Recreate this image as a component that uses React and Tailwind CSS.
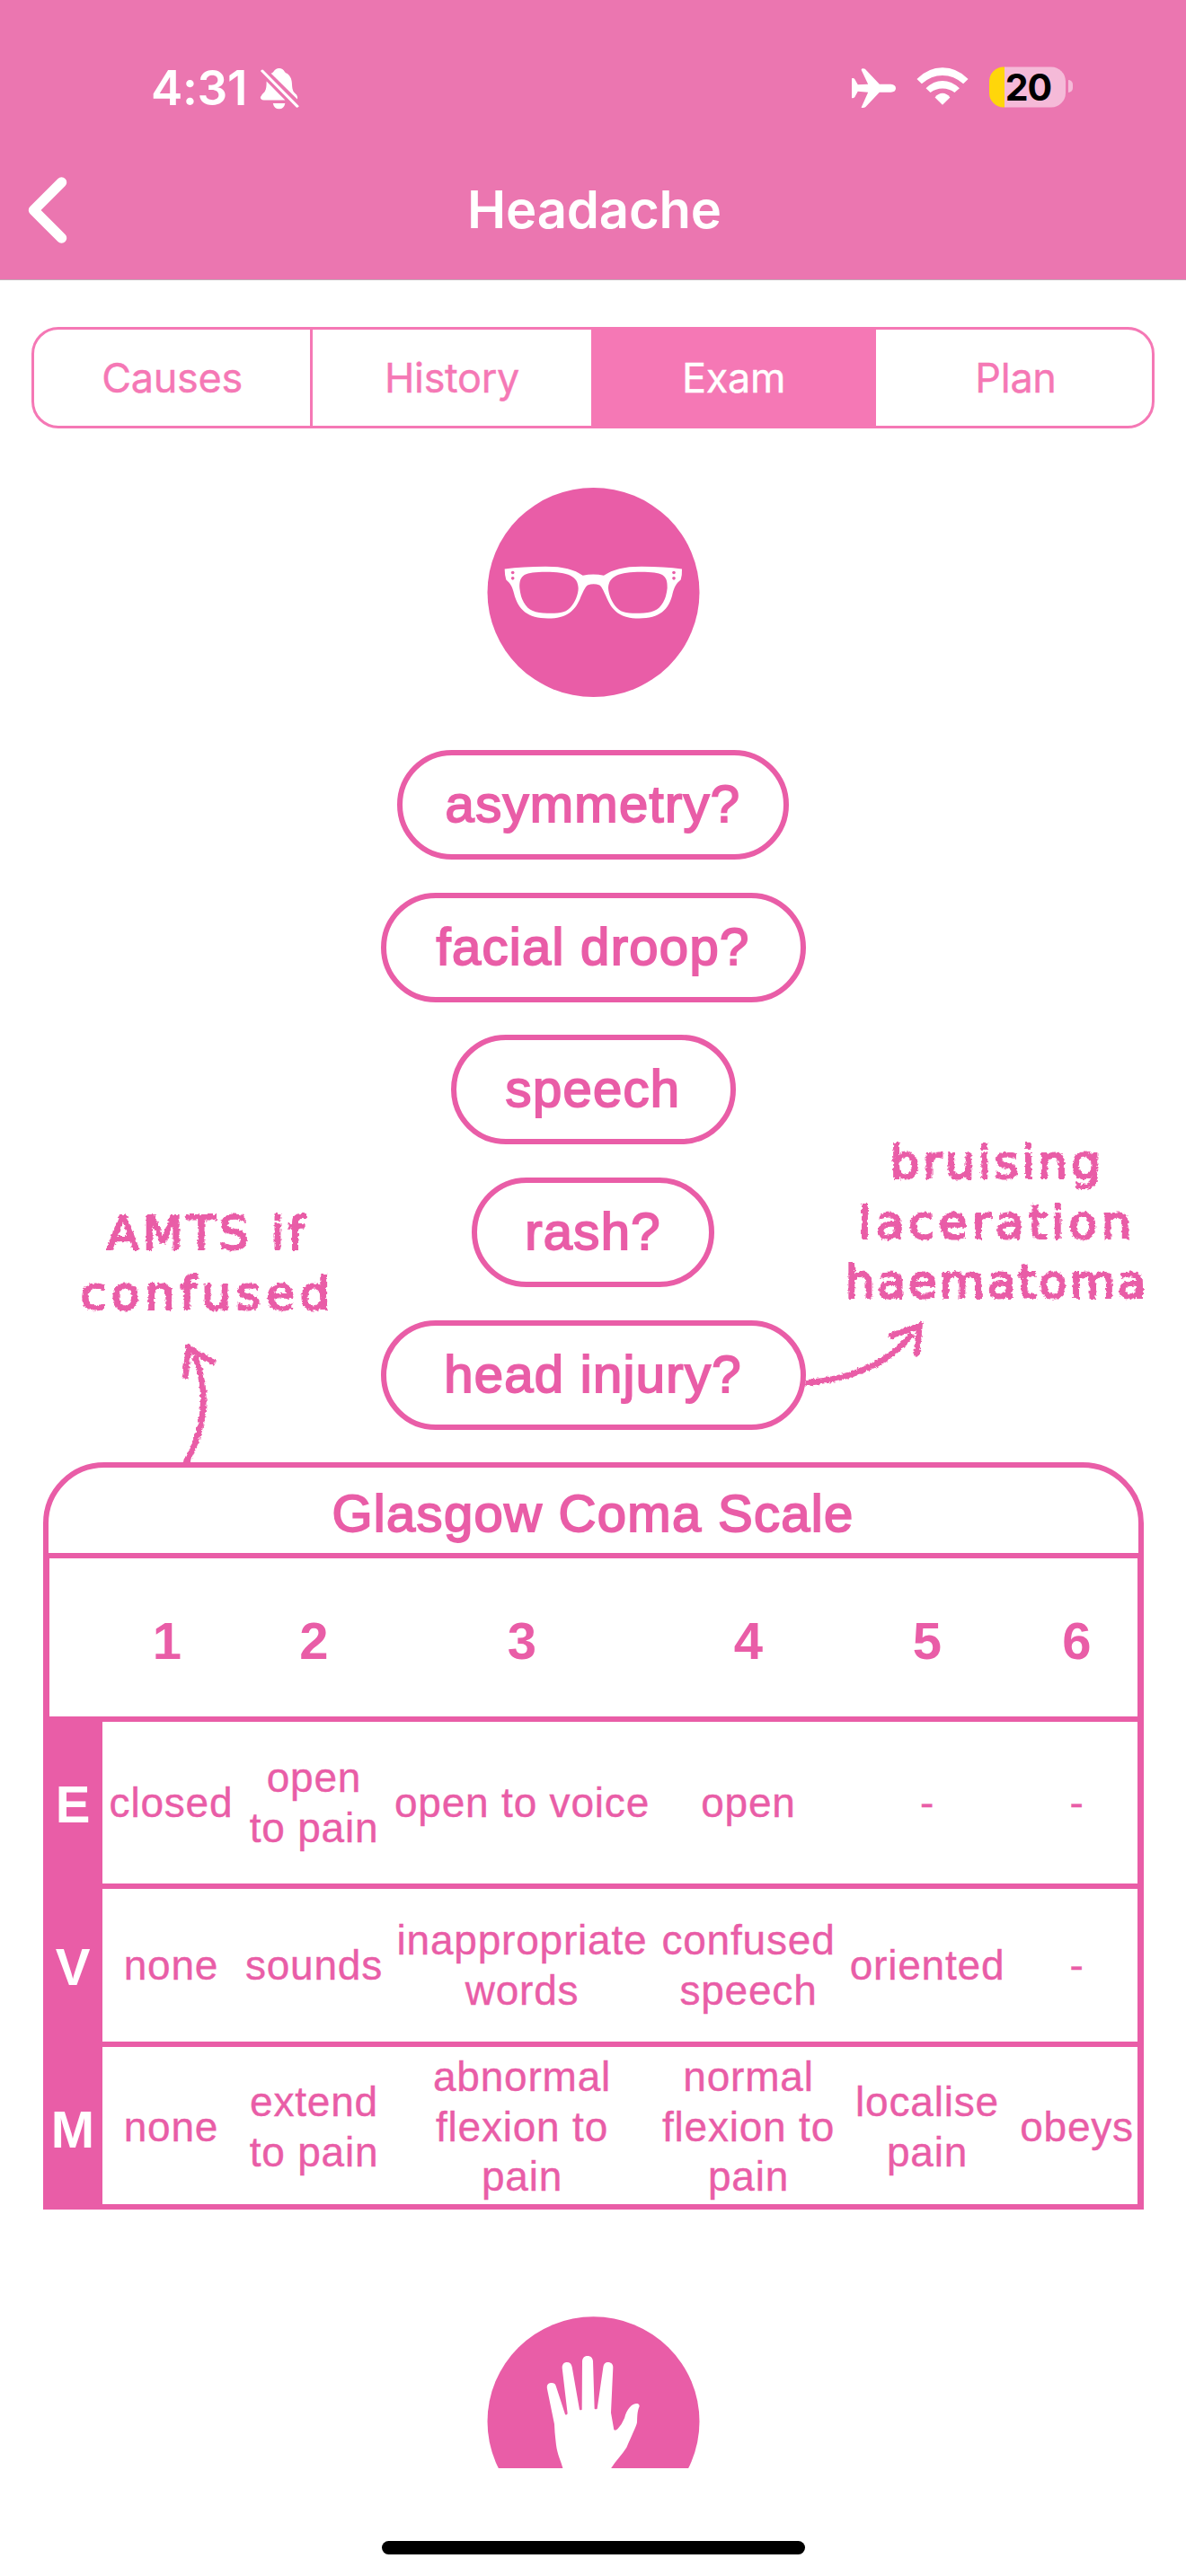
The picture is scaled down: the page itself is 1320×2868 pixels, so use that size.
const PINK = "#e95da7";

function StatusBar() {
  return (
    <div className="flex h-[196px] items-start justify-between pt-[68px] pl-[168px] pr-[126px]">
      <div className="flex h-[60px] items-center">
        <span className="w-[121px] whitespace-nowrap text-[53px] leading-[60px] font-semibold tracking-[-0.3px]">4:31</span>
        <svg className="h-[47px] w-[44px]" viewBox="686 104 104 140" preserveAspectRatio="none" fill="#fff">
          <path d="M716 124 Q720 122 722 119 Q728 107 737 107 Q747 107 752 119 Q754 123 759 125 C768 134 771 147 771 160 C772 185 776 186 783 195 Q787 202 785 210 Z" />
          <path d="M704 150 L753 213 L697 213 Q688 212 688 203 Q690 195 699 185 C704 175 704 165 704 150 Z" />
          <path d="M721 223 H753 Q750 242 737 242 Q724 242 721 223 Z" />
          <path d="M693 116 L785 233" stroke="#fff" strokeWidth="8" strokeLinecap="round" />
        </svg>
      </div>
      <div className="flex h-[60px] items-center">
        <svg className="h-[44px] w-[49px]" viewBox="682 108 116 132" preserveAspectRatio="none" fill="#fff">
          <path d="M682 142 Q687 139 690 145 L698 163 L725 161 L707 113 Q708 107 717 110 L755 161 L785 161 Q798 163 798 174.500 Q798 187 785 188 L755 188 L718 238 Q713 241 707 239 L725 188 L698 185 L690 204 Q686 209 682 207 Z" />
        </svg>
        <svg className="ml-[23px] h-[42px] w-[58px] -translate-y-0.5" viewBox="854 105 138 127" preserveAspectRatio="none" fill="#fff">
          <path d="M855 144 Q885 106 923 106 Q961 106 991 144 L978 160 Q953 132 923 132 Q893 132 868 160 Z" />
          <path d="M879 175 Q899 150 923 150 Q947 150 968 175 L955 190 Q941 176 923 176 Q905 176 891 190 Z" />
          <path d="M903 206 Q912 192 923 192 Q934 192 943 206 L923 231 Z" />
        </svg>
        <div className="ml-[23px] flex h-[45px] w-[85px] -translate-y-[1.5px] items-center justify-center rounded-[16px] bg-gradient-to-r from-[#ffd60a] from-[17px] to-[#f5bad8] to-[17px]">
          <span className="pl-[2px] text-[41px] leading-[54px] font-bold tracking-[-1px] text-black">20</span>
        </div>
        <div className="ml-[3px] h-[14px] w-[5px] -translate-y-0.5 rounded-r-full bg-[#f5bad8]" />
      </div>
    </div>
  );
}

function Header() {
  return (
    <header className="h-[312px] border-b border-[#c0aeb7] bg-[#eb76b0] font-[Inter,sans-serif] text-white">
      <StatusBar />
      <div className="grid h-[75px] grid-cols-[1fr_auto_1fr] items-center">
        <svg className="ml-[30px] h-[76px] w-[46px]" viewBox="0 0 46 76" fill="none" stroke="#fff" strokeWidth="11.500" strokeLinecap="round" strokeLinejoin="round">
          <path d="M38.500 7 L7.500 38 L38.500 69" />
        </svg>
        <h1 className="-translate-y-px pl-[3px] text-[58px] leading-[75px] font-semibold tracking-[-0.2px]">Headache</h1>
      </div>
    </header>
  );
}

function Tabs() {
  return (
    <nav className="mx-[35px] mt-[52px] flex h-[113px] overflow-hidden rounded-[30px] border-[3px] border-[#f578b5] font-[Inter,sans-serif] text-[45px] tracking-[-0.3px] text-[#f578b5] [-webkit-text-stroke:0.4px]">
      <div className="flex w-[310px] items-center justify-center border-r-[3px] border-[#f578b5]">Causes</div>
      <div className="flex w-[310px] items-center justify-center">History</div>
      <div className="flex w-[317px] items-center justify-center bg-[#f578b5] text-white">Exam</div>
      <div className="flex flex-1 items-center justify-center pl-[4px]">Plan</div>
    </nav>
  );
}

function GlassesBadge() {
  return (
    <svg className="mx-auto mt-[66px] block h-[233px] w-[237px]" viewBox="64 39 711 700" preserveAspectRatio="none">
      <ellipse cx="419.500" cy="389" rx="354" ry="350" fill={PINK} />
      <path
        fill="#fff"
        fillRule="evenodd"
        d="M123 311 Q185 303 260 303 C320 303 355 313 384 333 Q419 325 454 333 C485 313 520 303 580 303 Q655 303 715 311 Q716 330 711 347 C694 361 690 372 684 392 C672 448 640 476 572 476 C510 476 483 450 466 412 C455 389 449 372 440 365 Q420 358 400 365 C391 372 384 389 374 412 C357 450 330 476 268 476 C200 476 168 448 154 392 C149 372 144 361 128 347 Q123 330 123 311 Z
           M173 375 C171 330 190 321 260 321 C335 321 368 335 369 375 C369 395 358 425 342 440 C325 459 300 459 265 459 C225 459 202 450 187 423 Q176 405 173 375 Z
           M666 375 C668 330 649 321 579 321 C504 321 471 335 469 375 C470 395 481 425 497 440 C514 459 539 459 574 459 C614 459 637 450 652 423 Q663 405 666 375 Z"
      />
      <circle cx="150" cy="323" r="5.500" fill={PINK} />
      <circle cx="150" cy="342" r="5.500" fill={PINK} />
      <circle cx="688" cy="323" r="5.500" fill={PINK} />
      <circle cx="688" cy="342" r="5.500" fill={PINK} />
    </svg>
  );
}

function HandBadge() {
  return (
    <div className="mx-auto mt-[119px] h-[169px] w-[237px] overflow-hidden">
      <svg className="block h-[234px] w-[237px]" viewBox="64 58 711 702">
        <ellipse cx="419.500" cy="409" rx="354" ry="350" fill={PINK} />
        <path
          fill="#fff"
          d="M289 418 L265 300 C262 285 270 280 280 280 Q291 280 294 290 L325 385 Q329 389 333 383 L315 230 C315 217 322 211 331 211 Q345 211 348 227 L373 369 Q377 373 381 369 L382 208 C383 195 391 190 400 190 C410 190 417 196 418 208 L423 366 Q427 370 432 366 L452 228 C454 216 460 211 468 211 C479 211 485 218 485 228 L478 380 L488 437 Q494 441 501 433 Q515 418 523 398 C531 366 548 349 565 349 Q573 350 573 358 C565 375 566 395 565 412 C563 425 545 460 530 496 C515 520 495 540 479 564 L470 620 H330 L317 564 C305 525 297 515 293 470 Q290 445 289 418 Z"
        />
      </svg>
    </div>
  );
}

function Pill({ className, children }) {
  return (
    <div className={`flex h-[122px] items-center justify-center rounded-full border-[6px] border-[#e95da7] pb-[3px] text-[58px] tracking-[1.3px] [-webkit-text-stroke:1.9px_#e95da7] ${className}`}>
      {children}
    </div>
  );
}

function ChalkFilter() {
  return (
    <svg className="absolute h-0 w-0" aria-hidden="true">
      <filter id="chalk" x="-5%" y="-5%" width="110%" height="110%">
        <feTurbulence type="fractalNoise" baseFrequency="0.3" numOctaves="2" seed="4" result="noise" />
        <feDisplacementMap in="SourceGraphic" in2="noise" scale="5" xChannelSelector="R" yChannelSelector="G" />
      </filter>
    </svg>
  );
}

const noteText =
  "flex flex-col items-center whitespace-nowrap font-[Chalkduster,'DejaVu_Sans',sans-serif] text-[52px] leading-[66.7px] [-webkit-text-stroke:2.2px_#e95da7] [filter:url(#chalk)]";

function Signs() {
  return (
    <section className="mt-[59px] grid h-[793px] grid-cols-[423.500px_473px_1fr] text-[#e95da7]">
      <div className="flex flex-col pt-[505px]">
        <div className={`ml-[6px] w-[450px] ${noteText}`}>
          <span className="tracking-[4.2px]">AMTS if</span>
          <span className="tracking-[5.8px]">confused</span>
        </div>
        <svg className="mt-[20px] ml-[196px] h-[137px] w-[52px] shrink-0 [filter:url(#chalk)]" viewBox="468 517 156 411" fill="none" stroke={PINK} strokeWidth="20">
          <path d="M498 930 C570 800 575 680 531 568" />
          <path d="M498 642 L510 542 L598 590" />
        </svg>
      </div>
      <div className="flex flex-col items-center gap-[36.700px]">
        <Pill className="w-[436px]">asymmetry?</Pill>
        <Pill className="w-[473px]">facial droop?</Pill>
        <Pill className="w-[317px]">speech</Pill>
        <Pill className="w-[270px]">rash?</Pill>
        <Pill className="w-[473px]">head injury?</Pill>
      </div>
      <div className="flex flex-col pt-[426px]">
        <div className={`ml-px w-[424px] ${noteText}`}>
          <span className="tracking-[3.6px]">bruising</span>
          <span className="tracking-[4.9px]">laceration</span>
          <span className="tracking-[2.6px]">haematoma</span>
        </div>
        <svg className="mt-[8px] -ml-1 h-[80px] w-[140px] shrink-0 [filter:url(#chalk)]" viewBox="36 683 420 240" fill="none" stroke={PINK} strokeWidth="20">
          <path d="M46 895 C180 885 310 845 403 732" />
          <path d="M325 740 L427 705 L418 805" />
        </svg>
      </div>
    </section>
  );
}

const rows = [
  { label: "E", height: "h-[186px]", cells: [["closed"], ["open", "to pain"], ["open to voice"], ["open"], ["-"], ["-"]] },
  { label: "V", height: "h-[176px]", cells: [["none"], ["sounds"], ["inappropriate", "words"], ["confused", "speech"], ["oriented"], ["-"]] },
  { label: "M", height: "h-[175px]", cells: [["none"], ["extend", "to pain"], ["abnormal", "flexion to", "pain"], ["normal", "flexion to", "pain"], ["localise", "pain"], ["obeys"]] },
];

const columns = "grid grid-cols-[59px_154px_164px_299px_205px_193px_140px]";

function ComaScale() {
  return (
    <section className="mx-auto flex h-[832px] w-[1225px] flex-col rounded-t-[68px] border-[6px] border-[#e95da7] text-[#e95da7]">
      <h2 className="flex h-[101px] shrink-0 items-center justify-center border-b-[6px] border-[#e95da7] pt-[6px] text-[58px] tracking-[1.3px] [-webkit-text-stroke:1.9px_#e95da7]">
        Glasgow Coma Scale
      </h2>
      <div className="flex flex-1 flex-col border-x border-[#e95da7]">
        <div className={`${columns} h-[182px] items-center border-b-[6px] border-[#e95da7] pt-[7px] text-center text-[58px] font-bold`}>
          <span />
          {[1, 2, 3, 4, 5, 6].map((n) => (
            <span key={n} className={n === 1 ? "pr-[9px]" : ""}>{n}</span>
          ))}
        </div>
        {rows.map((row, i) => (
          <div key={row.label} className={`${columns} ${row.height} ${i < 2 ? "border-b-[6px] border-[#e95da7]" : ""}`}>
            <div className={`flex items-center justify-center bg-[#e95da7] pr-[6px] text-[58px] font-bold text-white ${i < 2 ? "pt-[3px]" : "pt-[8px]"}`}>{row.label}</div>
            {row.cells.map((lines, c) => (
              <div key={c} className={`flex flex-col items-center justify-center text-[46px] leading-[55.5px] tracking-[0.8px] whitespace-nowrap [-webkit-text-stroke:0.4px_#e95da7] ${i < 2 ? "pt-px" : "pt-[4px]"}`}>
                {lines.map((line) => (
                  <span key={line}>{line}</span>
                ))}
              </div>
            ))}
          </div>
        ))}
      </div>
    </section>
  );
}

export default function App() {
  return (
    <main className="relative flex h-[2868px] w-[1320px] flex-col overflow-hidden bg-white font-['Helvetica_Neue','Liberation_Sans',sans-serif]">
      <ChalkFilter />
      <Header />
      <Tabs />
      <GlassesBadge />
      <Signs />
      <ComaScale />
      <HandBadge />
      <div className="mx-auto mt-auto mb-[24px] h-[15px] w-[471px] rounded-full bg-black" />
    </main>
  );
}
